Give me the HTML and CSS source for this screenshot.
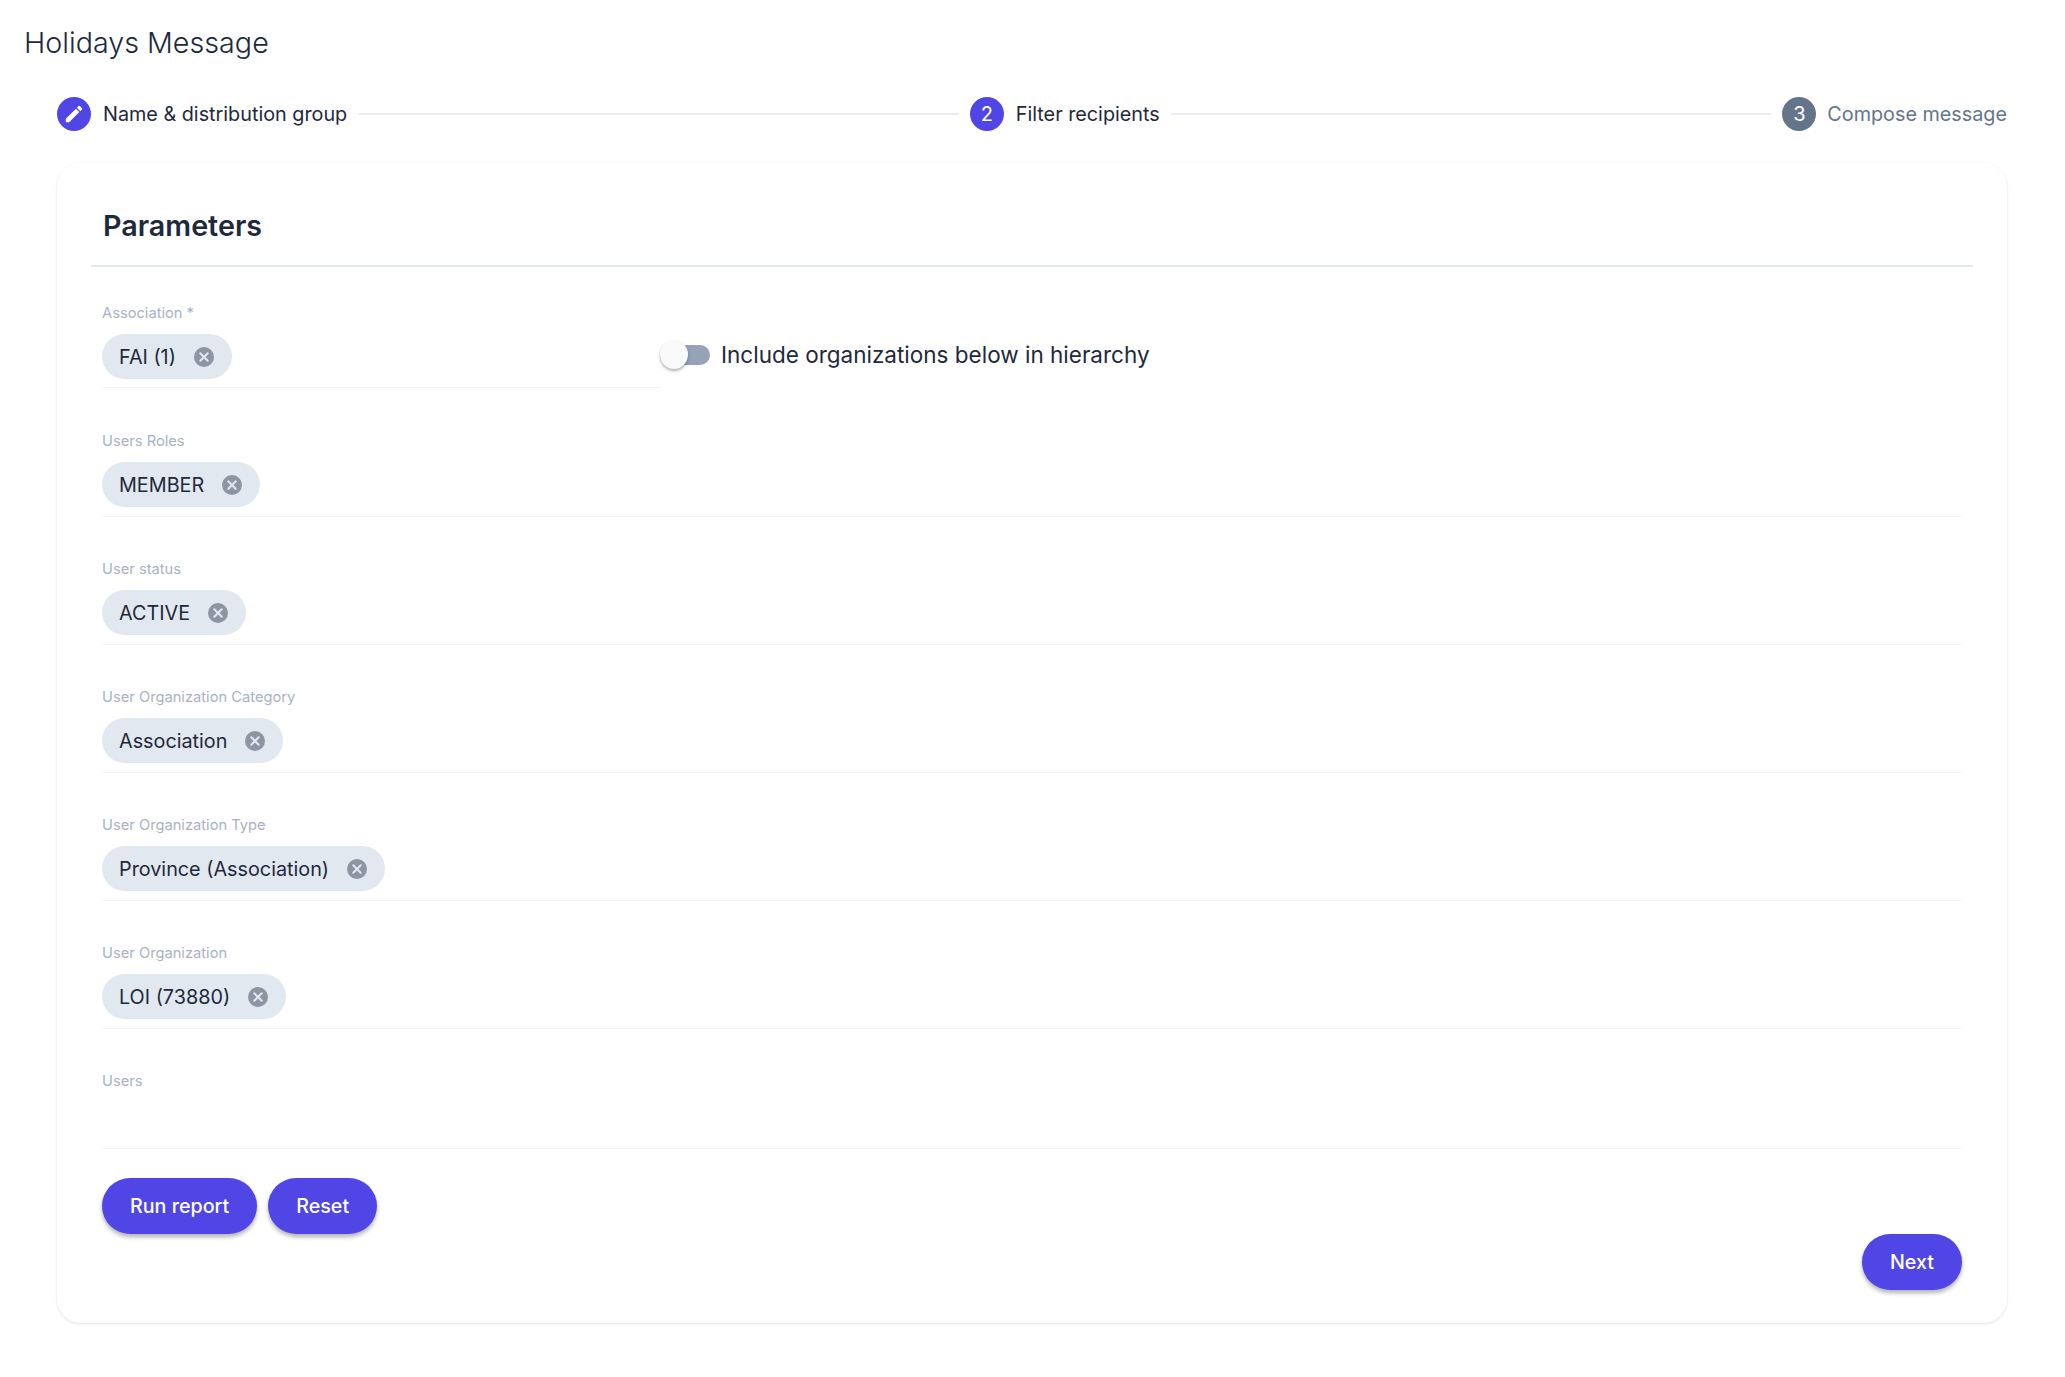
FILE: index.html
```html
<!DOCTYPE html>
<html lang="en">
<head>
<meta charset="utf-8">
<title>Holidays Message</title>
<link rel="stylesheet" href="styles.css">
</head>
<body>
<svg class="sprite" width="0" height="0" aria-hidden="true">
  <symbol id="x-circle" viewBox="0 0 20 20">
    <circle cx="10" cy="10" r="10" fill="#8e95a2"/>
    <path d="M6.3 6.3l7.4 7.4M13.7 6.3l-7.4 7.4" stroke="#e2e8f0" stroke-width="2" stroke-linecap="round" fill="none"/>
  </symbol>
</svg>
<h1 class="page-title">Holidays Message</h1>
<nav class="stepper">
  <div class="step">
    <span class="step-dot">
      <svg class="pencil" viewBox="0 0 24 24" width="22" height="22"><path fill="#fff" d="M3 17.25V21h3.75L17.81 9.94l-3.75-3.75L3 17.25zM20.71 7.04a1 1 0 0 0 0-1.41l-2.34-2.34a1 1 0 0 0-1.41 0l-1.83 1.83 3.75 3.75 1.83-1.83z"/></svg>
    </span>
    <span class="step-label">Name &amp; distribution group</span>
  </div>
  <span class="step-line"></span>
  <div class="step">
    <span class="step-dot">2</span>
    <span class="step-label">Filter recipients</span>
  </div>
  <span class="step-line"></span>
  <div class="step step-pending">
    <span class="step-dot">3</span>
    <span class="step-label">Compose message</span>
  </div>
</nav>
<main class="card">
  <h2 class="card-title">Parameters</h2>
  <form class="fields">
    <div class="field-row">
      <div class="field field-narrow">
        <label class="field-label">Association *</label>
        <div class="field-value"><span class="chip">FAI (1)<svg class="chip-x"><use href="#x-circle"/></svg></span></div>
      </div>
      <div class="toggle">
        <span class="toggle-track"><span class="toggle-thumb"></span></span>
        <span class="toggle-label">Include organizations below in hierarchy</span>
      </div>
    </div>
    <div class="field">
      <label class="field-label">Users Roles</label>
      <div class="field-value"><span class="chip">MEMBER<svg class="chip-x"><use href="#x-circle"/></svg></span></div>
    </div>
    <div class="field">
      <label class="field-label">User status</label>
      <div class="field-value"><span class="chip">ACTIVE<svg class="chip-x"><use href="#x-circle"/></svg></span></div>
    </div>
    <div class="field">
      <label class="field-label">User Organization Category</label>
      <div class="field-value"><span class="chip">Association<svg class="chip-x"><use href="#x-circle"/></svg></span></div>
    </div>
    <div class="field">
      <label class="field-label">User Organization Type</label>
      <div class="field-value"><span class="chip">Province (Association)<svg class="chip-x"><use href="#x-circle"/></svg></span></div>
    </div>
    <div class="field">
      <label class="field-label">User Organization</label>
      <div class="field-value"><span class="chip">LOI (73880)<svg class="chip-x"><use href="#x-circle"/></svg></span></div>
    </div>
    <div class="field">
      <label class="field-label">Users</label>
      <div class="field-value field-empty"></div>
    </div>
  </form>
  <div class="actions">
    <button class="btn" type="button">Run report</button>
    <button class="btn" type="button">Reset</button>
  </div>
  <div class="footer-actions">
    <button class="btn" type="button">Next</button>
  </div>
</main>
</body>
</html>
```
FILE: styles.css
```css
* { box-sizing: border-box; }
html, body { margin: 0; padding: 0; }
body {
  background: #fff;
  color: #1e293b;
  font-family: "Inter", "Liberation Sans", sans-serif;
  min-height: 1377px;
}
.sprite { position: absolute; }
.page-title {
  margin: 0;
  padding: 24px 0 0 24px;
  height: 97px;
  font-size: 28.7px;
  line-height: 38px;
  font-weight: 300;
}
.stepper {
  display: flex;
  align-items: center;
  height: 34px;
  margin: 0 58px 32px 57px;
}
.step { display: flex; align-items: center; gap: 12px; }
.step-dot {
  width: 34px;
  height: 34px;
  border-radius: 50%;
  background: #4f46e5;
  color: #fff;
  display: flex;
  align-items: center;
  justify-content: center;
  font-size: 20px;
}
.step-label { font-size: 19.8px; font-weight: 400; white-space: nowrap; }
.step-line { flex: 1; height: 2px; background: #e8edf3; margin: 0 11px; }
.step-pending { gap: 11px; }
.step-pending .step-dot { background: #64748b; }
.step-pending .step-label { color: #64748b; }
.card {
  margin: 0 58px 0 57px;
  height: 1160px;
  padding: 0 45px;
  background: #fff;
  border-radius: 24px;
  box-shadow: 0 1px 3px rgba(0, 0, 0, .12);
}
.card-title {
  margin: 0 -11px;
  padding: 44px 12px 0;
  height: 104px;
  border-bottom: 2px solid #e2e8f0;
  font-size: 28.7px;
  line-height: 38px;
  font-weight: 600;
}
.fields { padding-top: 36px; display: flex; flex-direction: column; }
.field-row { display: flex; align-items: flex-start; }
.field { flex: 1; min-width: 0; }
.field-row .field { flex: 0 0 558px; }
.field-label {
  display: block;
  height: 31px;
  font-size: 14.7px;
  line-height: 21px;
  color: #a9b2c1;
}
.field-value {
  height: 55px;
  border-bottom: 1px solid #f1f5f9;
  margin-bottom: 42px;
}
.field-row .field-value { height: 54px; margin-bottom: 43px; }
.field-empty { height: 47px; }
.chip {
  display: inline-flex;
  align-items: center;
  gap: 18px;
  height: 45px;
  padding: 0 18px 0 17px;
  border-radius: 23px;
  background: #e2e8f0;
  font-size: 19.8px;
}
.chip-x { width: 20px; height: 20px; }
.toggle {
  display: flex;
  align-items: center;
  gap: 11px;
  margin-top: 38px;
}
.toggle-track {
  position: relative;
  display: block;
  width: 50px;
  height: 20px;
  border-radius: 10px;
  background: #94a3b8;
}
.toggle-thumb {
  position: absolute;
  left: 0;
  top: -5px;
  width: 28px;
  height: 29px;
  border-radius: 50%;
  background: #fafafa;
  box-shadow: 0 2px 3px rgba(0, 0, 0, .3);
}
.toggle-label { font-size: 22.5px; font-weight: 400; }
.actions { display: flex; gap: 11px; margin-top: -13px; }
.footer-actions { display: flex; justify-content: flex-end; }
.btn {
  height: 56px;
  padding: 0 28px;
  border: 0;
  border-radius: 28px;
  background: #4f46e5;
  color: #fff;
  font-family: inherit;
  font-size: 19.7px;
  font-weight: 500;
  box-shadow: 0 3px 4px rgba(0, 0, 0, .3);
}
```
